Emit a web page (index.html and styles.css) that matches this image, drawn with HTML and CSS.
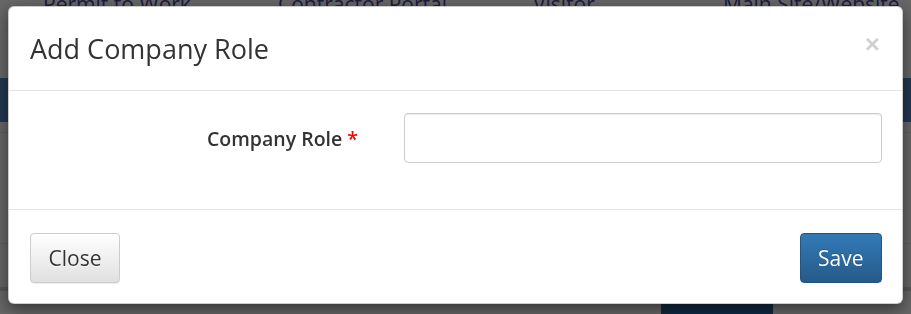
FILE: index.html
```html
<!DOCTYPE html>
<html lang="en">
<head>
    <meta charset="UTF-8">
    <title>Add Company Role</title>
    <meta name="viewport" content="width=device-width, initial-scale=1">
    <link rel="stylesheet" href="styles.css">
</head>
<body>
    <div class="page">
        <nav class="top-nav">
            <a href="#" class="nav-link">Permit to Work</a>
            <a href="#" class="nav-link">Contractor Portal</a>
            <a href="#" class="nav-link">Visitor</a>
            <a href="#" class="nav-link">Main Site/Website</a>
        </nav>
        <div class="banner"></div>
        <div class="page-row"></div>
        <div class="page-row page-row-tall"></div>
        <div class="page-footer">
            <span class="footer-block"></span>
        </div>
    </div>

    <div class="backdrop"></div>

    <div class="modal">
        <div class="modal-header">
            <h4 class="modal-title">Add Company Role</h4>
            <button type="button" class="close">&times;</button>
        </div>
        <div class="modal-body">
            <div class="form-group">
                <label class="control-label" for="companyRole">Company Role <span class="required">*</span></label>
                <input type="text" id="companyRole" class="form-control">
            </div>
        </div>
        <div class="modal-footer">
            <button type="button" class="btn btn-default">Close</button>
            <button type="button" class="btn btn-primary">Save</button>
        </div>
    </div>
</body>
</html>
```

FILE: styles.css
```css
    body {
        font-family: 'Open Sans', 'Liberation Sans', sans-serif;
        margin: 0;
        height: 100vh;
        overflow: hidden;
        background: #fff;
        color: #333;
    }
    .page {
        height: 100%;
        display: flex;
        flex-direction: column;
    }
    .top-nav {
        display: grid;
        grid-template-columns: 235px 255px 190px auto;
        padding-left: 43px;
        margin-top: -8px;
        height: 86px;
        font-size: 21px;
        line-height: 24px;
    }
    .nav-link {
        color: #48489a;
        text-decoration: none;
        white-space: nowrap;
    }
    .banner {
        height: 44px;
        background: #5a8cc8;
    }
    .page-row {
        height: 10px;
        border-bottom: 1px solid #e6e6e6;
    }
    .page-row-tall {
        height: 110px;
    }
    .page-footer {
        flex: 1;
        border-top: 4px solid #d6d6d6;
        margin-top: 43px;
        padding-left: 661px;
    }
    .footer-block {
        display: block;
        width: 112px;
        height: 100%;
        background: #2d64a0;
    }
    .backdrop {
        position: fixed;
        inset: 0;
        background: rgba(0, 0, 0, 0.6);
    }
    .modal {
        position: fixed;
        top: 6px;
        left: 8px;
        width: 895px;
        box-sizing: border-box;
        background: #fff;
        border: 1px solid rgba(0, 0, 0, 0.2);
        border-radius: 6px;
        box-shadow: 0 5px 15px rgba(0, 0, 0, 0.5);
    }
    .modal-header {
        display: flex;
        align-items: center;
        justify-content: space-between;
        height: 83px;
        padding: 0 22px 0 21px;
        border-bottom: 1px solid #e5e5e5;
    }
    .modal-title {
        margin: 0;
        font-size: 27px;
        font-weight: 400;
        color: #333;
    }
    .close {
        margin-top: -10px;
        padding: 0;
        border: none;
        background: none;
        font-family: 'Liberation Sans', sans-serif;
        font-size: 26px;
        font-weight: 700;
        line-height: 1;
        color: #000;
        opacity: 0.18;
        cursor: pointer;
    }
    .modal-body {
        padding: 22px 20px 46px 21px;
    }
    .form-group {
        display: grid;
        grid-template-columns: 328px 1fr;
        gap: 46px;
        align-items: center;
    }
    .control-label {
        text-align: right;
        font-size: 19.5px;
        font-weight: 600;
        color: #333;
    }
    .required {
        color: #f00;
    }
    .form-control {
        height: 50px;
        box-sizing: border-box;
        padding: 6px 12px;
        border: 1px solid #ccc;
        border-radius: 4px;
        box-shadow: inset 0 1px 1px rgba(0, 0, 0, 0.075);
        font-family: inherit;
        font-size: 18px;
    }
    .modal-footer {
        display: flex;
        justify-content: space-between;
        padding: 23px 20px 20px 21px;
        border-top: 1px solid #e5e5e5;
    }
    .btn {
        height: 50px;
        padding: 0 17.5px;
        font-family: inherit;
        font-size: 21px;
        border-radius: 4px;
        cursor: pointer;
    }
    .btn-default {
        color: #333;
        background: linear-gradient(to bottom, #fff 0%, #e0e0e0 100%);
        border: 1px solid #ccc;
        text-shadow: 0 1px 0 #fff;
        box-shadow: inset 0 1px 0 rgba(255, 255, 255, 0.15), 0 1px 1px rgba(0, 0, 0, 0.075);
    }
    .btn-primary {
        color: #fff;
        background: linear-gradient(to bottom, #337ab7 0%, #265a88 100%);
        border: 1px solid #245580;
        text-shadow: 0 -1px 0 rgba(0, 0, 0, 0.2);
    }
```
